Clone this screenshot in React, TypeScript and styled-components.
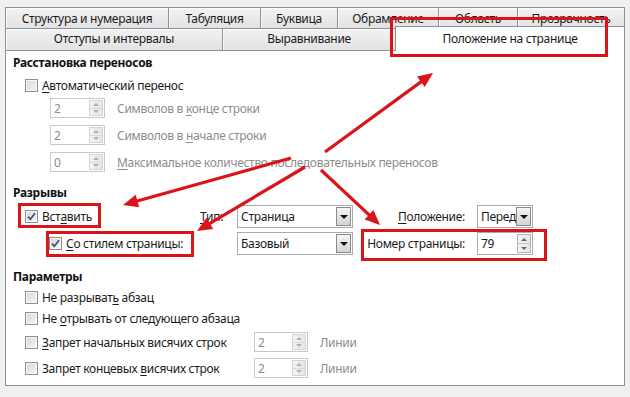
import React from "react";
import styled, { createGlobalStyle } from "styled-components";

const Global = createGlobalStyle`
  html, body { margin: 0; padding: 0; background: #f0f0f0; }
  body {
    font-family: "Noto Sans", "Open Sans", sans-serif;
    font-size: 12px;
    letter-spacing: -0.3px;
    color: #1b1b1b;
  }
`;

const Page = styled.div`
  position: relative;
  width: 630px;
  height: 397px;
  overflow: hidden;
  box-sizing: border-box;
  padding-top: 7px;
  background: #f0f0f0;
`;

const Tabs = styled.div`
  margin-left: 5px;
  width: 620px;
`;

const TabRow = styled.div<{ $h: number }>`
  display: flex;
  height: ${(p) => p.$h}px;
`;

const Tab = styled.div<{ $w: number; $pb?: number }>`
  box-sizing: border-box;
  flex: none;
  width: ${(p) => p.$w}px;
  height: 100%;
  display: flex;
  align-items: center;
  justify-content: center;
  padding-bottom: ${(p) => p.$pb ?? 0}px;
  border-top: 1px solid #8d9096;
  border-left: 1px solid #8d9096;
  background: linear-gradient(#f3f3f3, #e2e2e2);
  box-shadow: inset 1px 1px 0 #fbfbfb;
  white-space: nowrap;
  &:last-child {
    border-right: 1px solid #8d9096;
  }
`;

const ActiveTab = styled(Tab)`
  position: relative;
  z-index: 2;
  height: 25px;
  margin-top: -2px;
  background: #fff;
  box-shadow: none;
  padding-bottom: 2px;
`;

const Panel = styled.div`
  position: relative;
  z-index: 1;
  box-sizing: border-box;
  margin-left: 5px;
  width: 620px;
  height: 336px;
  border: 1px solid #8d9096;
  background: #fff;
`;

const SectionTitle = styled.div<{ $mt: number }>`
  height: 18px;
  line-height: 18px;
  margin-top: ${(p) => p.$mt}px;
  padding-left: 7px;
  font-weight: 700;
  color: #111;
`;

const CheckRow = styled.div<{ $pl: number; $mt?: number }>`
  display: flex;
  align-items: center;
  gap: 4px;
  height: 18px;
  margin-top: ${(p) => p.$mt ?? 0}px;
  padding-left: ${(p) => p.$pl}px;
  white-space: nowrap;
`;

const Box = styled.span`
  position: relative;
  flex: none;
  box-sizing: border-box;
  width: 13px;
  height: 13px;
  border: 1px solid #8f8f8f;
  background: linear-gradient(135deg, #d6d6d6, #f6f6f6);
  box-shadow: inset 0 0 0 1px #f7f7f7;
  display: flex;
  align-items: center;
  justify-content: center;
`;

const Acc = styled.span`
  text-decoration: underline;
  text-underline-offset: 2px;
`;

const Label = styled.span<{ $disabled?: boolean }>`
  color: ${(p) => (p.$disabled ? "#8c8c8c" : "#1b1b1b")};
  white-space: nowrap;
`;

const SpinRow = styled.div<{ $mt: number }>`
  display: flex;
  align-items: center;
  gap: 12px;
  height: 20px;
  margin-top: ${(p) => p.$mt}px;
  padding-left: 44px;
`;

const SpinBox = styled.div<{ $w: number; $disabled?: boolean }>`
  box-sizing: border-box;
  flex: none;
  width: ${(p) => p.$w}px;
  height: ${(p) => (p.$disabled ? 20 : 23)}px;
  border: 1px solid ${(p) => (p.$disabled ? "#c9c9c9" : "#a9abb0")};
  background: #fff;
  display: flex;
  align-items: center;
  justify-content: space-between;
  padding: 1px 1px 1px 3px;
  color: ${(p) => (p.$disabled ? "#8c8c8c" : "#1b1b1b")};
`;

const SpinButtons = styled.div<{ $disabled?: boolean }>`
  box-sizing: border-box;
  width: 14px;
  height: 100%;
  display: flex;
  flex-direction: column;
  border: 1px solid ${(p) => (p.$disabled ? "#d4d4d4" : "#b3b3b3")};
  background: linear-gradient(90deg, #f4f4f4, #e6e6e6);
`;

const SpinHalf = styled.div<{ $down?: boolean; $disabled?: boolean }>`
  flex: 1;
  display: flex;
  align-items: center;
  justify-content: center;
  border-top: ${(p) => (p.$down ? `1px solid ${p.$disabled ? "#dadada" : "#c4c4c4"}` : "none")};
  &::after {
    content: "";
    width: 0;
    height: 0;
    border-left: 3px solid transparent;
    border-right: 3px solid transparent;
    ${(p) =>
      p.$down
        ? `border-top: 3px solid ${p.$disabled ? "#b0b0b0" : "#6a6a6a"};`
        : `border-bottom: 3px solid ${p.$disabled ? "#b0b0b0" : "#6a6a6a"};`}
  }
`;

const BreakGrid = styled.div`
  display: grid;
  grid-template-columns: 194px 37px 116px 124px 56px;
  grid-auto-rows: 23px;
  row-gap: 4px;
  margin-top: 3px;
  align-items: center;
`;

const GridLabel = styled.div<{ $right?: boolean }>`
  text-align: ${(p) => (p.$right ? "right" : "left")};
  padding-right: ${(p) => (p.$right ? 12 : 0)}px;
  white-space: nowrap;
`;

const SelectBox = styled.div`
  box-sizing: border-box;
  height: 23px;
  border: 1px solid #a9abb0;
  background: #fff;
  display: flex;
  align-items: center;
  justify-content: space-between;
  padding: 1px 1px 1px 3px;
  white-space: nowrap;
`;

const DropButton = styled.div`
  box-sizing: border-box;
  flex: none;
  width: 15px;
  height: 100%;
  border: 1px solid #8a8a8a;
  background: linear-gradient(#f5f5f5, #d4d4d4);
  display: flex;
  align-items: center;
  justify-content: center;
  &::after {
    content: "";
    width: 0;
    height: 0;
    border-left: 4px solid transparent;
    border-right: 4px solid transparent;
    border-top: 4px solid #111;
  }
`;

const ParamRow = styled.div<{ $mt: number; $h: number }>`
  display: grid;
  grid-template-columns: 236px 54px auto;
  column-gap: 12px;
  align-items: center;
  height: ${(p) => p.$h}px;
  margin-top: ${(p) => p.$mt}px;
`;

const Overlay = styled.svg`
  position: absolute;
  left: 0;
  top: 0;
  z-index: 5;
  pointer-events: none;
`;

const RED = "#dc1419";

function Check({ checked }: { checked?: boolean }) {
  return (
    <Box>
      {checked && (
        <svg width="9" height="9" viewBox="0 0 9 9">
          <path d="M1 4.6 L3.4 7.2 L8 1.2" fill="none" stroke="#3e4f82" strokeWidth="1.8" />
        </svg>
      )}
    </Box>
  );
}

function Spin({ value, w, disabled }: { value: string; w: number; disabled?: boolean }) {
  return (
    <SpinBox $w={w} $disabled={disabled}>
      <span>{value}</span>
      <SpinButtons $disabled={disabled}>
        <SpinHalf $disabled={disabled} />
        <SpinHalf $down $disabled={disabled} />
      </SpinButtons>
    </SpinBox>
  );
}

function Select({ value }: { value: string }) {
  return (
    <SelectBox>
      <span>{value}</span>
      <DropButton />
    </SelectBox>
  );
}

function Arrow({ x1, y1, x2, y2 }: { x1: number; y1: number; x2: number; y2: number }) {
  const dx = x2 - x1;
  const dy = y2 - y1;
  const len = Math.hypot(dx, dy);
  const ux = dx / len;
  const uy = dy / len;
  const hl = 15;
  const hw = 6.5;
  const bx = x2 - ux * hl;
  const by = y2 - uy * hl;
  const px = -uy;
  const py = ux;
  return (
    <g>
      <line x1={x1} y1={y1} x2={bx + ux * 3} y2={by + uy * 3} stroke={RED} strokeWidth={3.2} />
      <polygon
        points={`${x2},${y2} ${bx + px * hw},${by + py * hw} ${bx - px * hw},${by - py * hw}`}
        fill={RED}
      />
    </g>
  );
}

const row1 = [
  ["Структура и нумерация", 163],
  ["Табуляция", 92],
  ["Буквица", 77],
  ["Обрамление", 101],
  ["Область", 79],
  ["Прозрачность", 108],
] as const;

export default function App() {
  return (
    <Page>
      <Global />
      <Tabs>
        <TabRow $h={21}>
          {row1.map(([t, w]) => (
            <Tab key={t} $w={w}>
              {t}
            </Tab>
          ))}
        </TabRow>
        <TabRow $h={22}>
          <Tab $w={217} $pb={3}>Отступы и интервалы</Tab>
          <Tab $w={173} $pb={3}>Выравнивание</Tab>
          <ActiveTab $w={230}>Положение на странице</ActiveTab>
        </TabRow>
      </Tabs>
      <Panel>
        <SectionTitle $mt={3}>Расстановка переносов</SectionTitle>
        <CheckRow $pl={19} $mt={4}>
          <Check />
          <Label>
            <Acc>А</Acc>втоматический перенос
          </Label>
        </CheckRow>
        <SpinRow $mt={4}>
          <Spin value="2" w={55} disabled />
          <Label $disabled>
            Символов в <Acc>к</Acc>онце строки
          </Label>
        </SpinRow>
        <SpinRow $mt={7}>
          <Spin value="2" w={55} disabled />
          <Label $disabled>
            Символов в <Acc>н</Acc>ачале строки
          </Label>
        </SpinRow>
        <SpinRow $mt={7}>
          <Spin value="0" w={55} disabled />
          <Label $disabled>
            <Acc>М</Acc>аксимальное количество последовательных переносов
          </Label>
        </SpinRow>

        <SectionTitle $mt={12}>Разрывы</SectionTitle>
        <BreakGrid>
          <CheckRow $pl={19}>
            <Check checked />
            <Label>
              Вст<Acc>а</Acc>вить
            </Label>
          </CheckRow>
          <GridLabel>
            <Acc>Т</Acc>ип:
          </GridLabel>
          <Select value="Страница" />
          <GridLabel $right>
            <Acc>П</Acc>оложение:
          </GridLabel>
          <Select value="Перед" />

          <CheckRow $pl={43}>
            <Check checked />
            <Label>
              <Acc>С</Acc>о стилем страницы:
            </Label>
          </CheckRow>
          <div />
          <Select value="Базовый" />
          <GridLabel $right>Номер страницы:</GridLabel>
          <Spin value="79" w={56} />
        </BreakGrid>

        <SectionTitle $mt={13}>Параметры</SectionTitle>
        <CheckRow $pl={19} $mt={2}>
          <Check />
          <Label>
            Не разрыват<Acc>ь</Acc> абзац
          </Label>
        </CheckRow>
        <CheckRow $pl={19} $mt={3}>
          <Check />
          <Label>
            Не <Acc>о</Acc>трывать от следующего абзаца
          </Label>
        </CheckRow>
        <ParamRow $mt={5} $h={20}>
          <CheckRow $pl={19}>
            <Check />
            <Label>
              <Acc>З</Acc>апрет начальных висячих строк
            </Label>
          </CheckRow>
          <Spin value="2" w={54} disabled />
          <Label $disabled>Линии</Label>
        </ParamRow>
        <ParamRow $mt={6} $h={20}>
          <CheckRow $pl={19}>
            <Check />
            <Label>
              Запрет концевых <Acc>в</Acc>исячих строк
            </Label>
          </CheckRow>
          <Spin value="2" w={54} disabled />
          <Label $disabled>Линии</Label>
        </ParamRow>
      </Panel>

      <Overlay width="630" height="397" viewBox="0 0 630 397">
        <g fill="none" stroke={RED} strokeWidth={3}>
          <rect x={391.5} y={18.5} width={215} height={37} />
          <rect x={19.5} y={204.5} width={80} height={22} />
          <rect x={47.5} y={232.5} width={145} height={23} />
          <rect x={362.5} y={230.5} width={183} height={29} />
        </g>
        <Arrow x1={325} y1={152} x2={433} y2={73} />
        <Arrow x1={291} y1={158} x2={123} y2={205} />
        <Arrow x1={305} y1={167} x2={197} y2={231} />
        <Arrow x1={321} y1={170} x2={380} y2={225} />
      </Overlay>
    </Page>
  );
}
